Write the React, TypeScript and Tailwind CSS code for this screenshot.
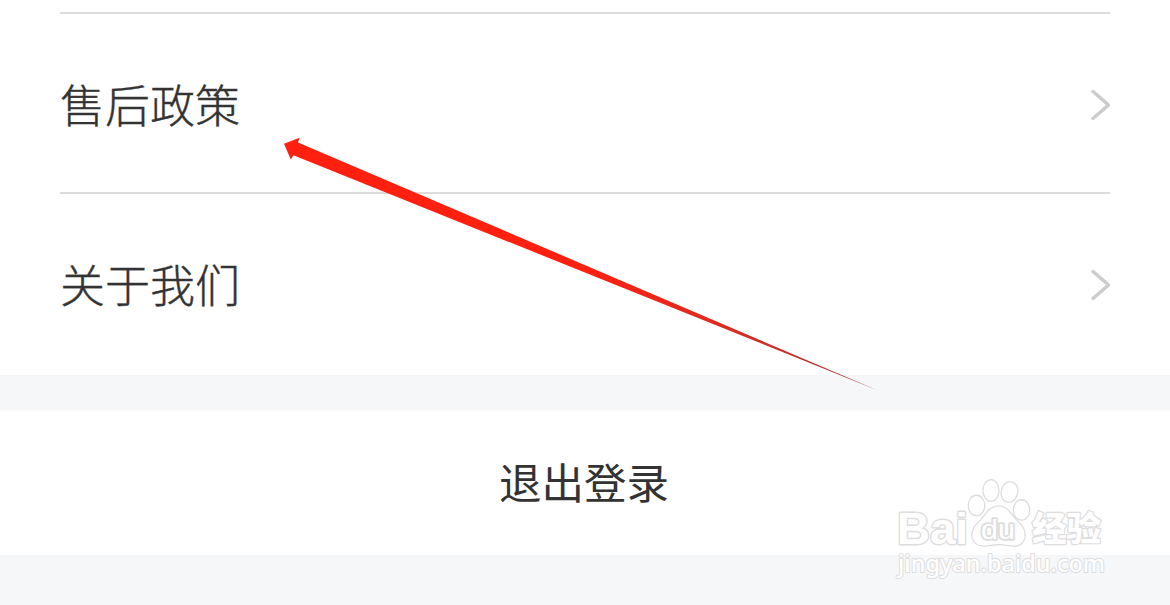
interface MenuRowProps {
  label: string;
}

function MenuRow({ label }: MenuRowProps) {
  return (
    <button className="flex h-[180px] w-full items-center justify-between border-t-2 border-[#dcdcdc] text-left">
      <span className="pt-px text-[45px] leading-none font-light text-[#333333] [-webkit-text-stroke:0.4px_#333333]">
        {label}
      </span>
      <svg
        width="20"
        height="32"
        viewBox="0 0 20 32"
        fill="none"
        className="mt-[3px]"
      >
        <path
          d="M3 2.500L18.500 16L3 29.500"
          stroke="#cccccc"
          strokeWidth="3.4"
          strokeLinecap="round"
          strokeLinejoin="miter"
        />
      </svg>
    </button>
  );
}

function Arrow() {
  return (
    <svg
      className="pointer-events-none absolute top-0 left-0"
      width="1170"
      height="605"
      viewBox="0 0 1170 605"
    >
      <defs>
        <linearGradient id="arrow" x1="0" x2="1" y1="0" y2="0">
          <stop offset="0.5" stopColor="#ff2010" />
          <stop offset="0.75" stopColor="#dc2a20" />
          <stop offset="1" stopColor="#a83838" />
        </linearGradient>
      </defs>
      <polygon
        points="284,143.8 299.6,137.8 298,142.4 878,390.5 293.4,155.2 290.8,159.4"
        fill="url(#arrow)"
      />
    </svg>
  );
}

function Watermark() {
  return (
    <svg
      className="pointer-events-none absolute top-[470px] left-[890px]"
      width="230"
      height="120"
      viewBox="0 0 230 120"
      fill="#ffffff"
      stroke="#dddddd"
      strokeWidth="2.8"
      strokeLinejoin="round"
      paintOrder="stroke"
    >
      <text
        x="7"
        y="74"
        fontSize="45"
        fontWeight="700"
        textLength="71"
        lengthAdjust="spacingAndGlyphs"
        fontFamily="'Liberation Sans', sans-serif"
      >
        Bai
      </text>
      <g strokeWidth="2.6">
        <ellipse cx="86.5" cy="35.5" rx="7.6" ry="9.6" />
        <ellipse cx="101" cy="20.500" rx="7.4" ry="10.2" />
        <ellipse
          cx="119.5"
          cy="22"
          rx="7.6"
          ry="9.8"
          transform="rotate(12 119.5 22)"
        />
        <ellipse cx="131.5" cy="40" rx="7.6" ry="9.6" />
        <path d="M108.500 36.500C101 36.500 98 42 93 48C88 54 82.500 57 82.500 65C82.500 72.500 88 75.500 94 75.500C100 75.500 103 74 109 74C115 74 118 75.500 124 75.500C131 75.500 134.500 71 134.500 65C134.500 57 129 54 124 48C119 42 116 36.500 108.500 36.500Z" />
      </g>
      <text
        x="91"
        y="69"
        fontSize="28"
        fontWeight="400"
        strokeWidth="3.6"
        textLength="34"
        lengthAdjust="spacingAndGlyphs"
        fontFamily="'Liberation Sans', sans-serif"
      >
        du
      </text>
      <text
        x="142"
        y="71"
        fontSize="34"
        fontWeight="900"
        strokeWidth="2.4"
        textLength="69"
        lengthAdjust="spacingAndGlyphs"
      >
        经验
      </text>
      <text
        x="8"
        y="102"
        fontSize="24"
        fontWeight="500"
        strokeWidth="2"
        textLength="207"
        lengthAdjust="spacingAndGlyphs"
        fontFamily="'Noto Sans', sans-serif"
      >
        jingyan.baidu.com
      </text>
    </svg>
  );
}

export default function App() {
  return (
    <div className="relative flex h-[605px] w-[1170px] flex-col overflow-hidden bg-[#f6f7f9] font-['Noto_Sans_CJK_SC',sans-serif]">
      <div className="h-[375px] bg-white px-[60px] pt-[12px]">
        <MenuRow label="售后政策" />
        <MenuRow label="关于我们" />
      </div>

      <button className="mt-[36px] flex h-[144px] items-center justify-center bg-white pr-[2px] pb-[3px] text-[42.5px] leading-none text-[#333333]">
        退出登录
      </button>

      <Arrow />
      <Watermark />
    </div>
  );
}
